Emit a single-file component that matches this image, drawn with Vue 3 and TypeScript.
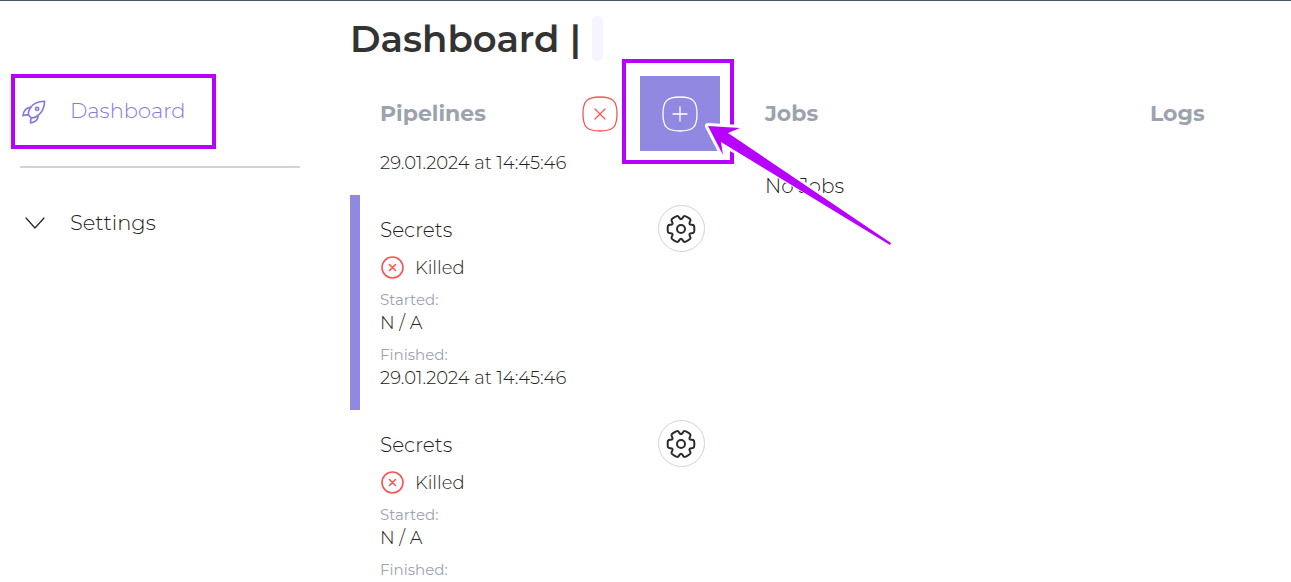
<script setup lang="ts">
import { onMounted, ref } from 'vue'

interface Pipeline {
  id: number
  name: string
  status: string
  started: string
  finished: string
  selected: boolean
}

const pipelines: Pipeline[] = [1, 2, 3].map((id) => ({
  id,
  name: 'Secrets',
  status: 'Killed',
  started: 'N / A',
  finished: '29.01.2024 at 14:45:46',
  selected: id === 2,
}))

const list = ref<HTMLElement | null>(null)

// The list opens scrolled to the end of the first pipeline.
onMounted(() => {
  if (list.value) list.value.scrollTop = 171
})

// Outline of a six-toothed cog with rounded corners.
function cogOutline(): string {
  const corners: [number, number][] = []
  for (let tooth = 0; tooth < 6; tooth++) {
    for (const [offset, radius] of [[-18, 13.2], [-11, 13.6], [11, 13.6], [18, 13.2], [25, 9.9], [35, 9.9]]) {
      const angle = ((tooth * 60 + offset) * Math.PI) / 180
      corners.push([radius * Math.cos(angle), radius * Math.sin(angle)])
    }
  }
  const mid = (a: [number, number], b: [number, number]) =>
    `${((a[0] + b[0]) / 2).toFixed(2)} ${((a[1] + b[1]) / 2).toFixed(2)}`
  const last = corners[corners.length - 1]
  let path = `M${mid(last, corners[0])}`
  corners.forEach((corner, i) => {
    const next = corners[(i + 1) % corners.length]
    path += `Q${corner[0].toFixed(2)} ${corner[1].toFixed(2)} ${mid(corner, next)}`
  })
  return path + 'Z'
}

const cog = cogOutline()
</script>

<template>
  <div class="page">
    <aside class="sidebar">
      <nav>
        <a href="#dashboard" class="link active">
          <svg class="rocket" viewBox="58 115 76 76" aria-hidden="true">
            <path d="M133 125C112 126 97 132 90 144C84 153 82 160 84 167L92 175C100 176 107 174 114 167C126 158 132 145 133 125Z" />
            <circle cx="110" cy="148" r="5" />
            <path d="M91 143C78 144 69 152 67 169C73 166 78 166 84 167M92 175C90 181 90 186 90 191C105 188 113 181 113 168" />
          </svg>
          <span>Dashboard</span>
          <span class="highlight nav-highlight"></span>
        </a>
        <hr />
        <a href="#settings" class="link">
          <svg class="chevron" viewBox="0 0 25 25" aria-hidden="true">
            <path d="M6 8L15 18L24 8" />
          </svg>
          <span>Settings</span>
        </a>
      </nav>
    </aside>

    <main class="main">
      <h1>Dashboard | <span class="placeholder"></span></h1>
      <div class="columns">
        <section class="column">
          <header class="head">
            <h2>Pipelines</h2>
            <button type="button" class="tool" aria-label="Close">
              <svg class="close" viewBox="0 0 36 36" aria-hidden="true">
                <path d="M18 1C31 1 35 5 35 18S31 35 18 35S1 31 1 18S5 1 18 1Z" />
                <path d="M13 13L23 23M23 13L13 23" />
              </svg>
            </button>
            <button type="button" class="tool add" aria-label="Add pipeline">
              <svg viewBox="0 0 36 36" aria-hidden="true">
                <path d="M18 1C31 1 35 5 35 18S31 35 18 35S1 31 1 18S5 1 18 1Z" />
                <path d="M18 11V25M11 18H25" />
              </svg>
              <span class="highlight add-highlight"></span>
            </button>
          </header>
          <div ref="list" class="list">
            <article v-for="p in pipelines" :key="p.id" class="item" :class="{ selected: p.selected }">
              <div class="info">
                <h3>{{ p.name }}</h3>
                <p class="status">
                  <svg viewBox="0 0 24 24" aria-hidden="true">
                    <circle cx="12.5" cy="11.5" r="10.5" />
                    <path d="M9.5 8.5L15.5 14.5M15.5 8.5L9.5 14.5" />
                  </svg>
                  {{ p.status }}
                </p>
                <dl>
                  <dt>Started:</dt>
                  <dd>{{ p.started }}</dd>
                  <dt>Finished:</dt>
                  <dd>{{ p.finished }}</dd>
                </dl>
              </div>
              <button type="button" class="gear" aria-label="Pipeline settings">
                <svg viewBox="-15 -15 30 30" aria-hidden="true">
                  <path :d="cog" />
                  <circle r="4" />
                </svg>
              </button>
            </article>
          </div>
        </section>

        <section class="column">
          <header class="head"><h2>Jobs</h2></header>
          <p class="empty">No Jobs</p>
          <svg class="arrow" viewBox="700 118 196 130" aria-hidden="true">
            <path class="halo" d="M708 126L740 128L728 133L850 216L720 142L723 155Z" />
            <path d="M708 126L740 128L728 133L891 243L890 245L721 142L723 155Z" />
          </svg>
        </section>

        <section class="column">
          <header class="head"><h2>Logs</h2></header>
        </section>
      </div>
    </main>
  </div>
</template>

<style>
body {
  margin: 0;
}
</style>

<style scoped>
.page {
  box-sizing: border-box;
  display: flex;
  height: 100vh;
  overflow: hidden;
  border-top: 1px solid #455a64;
  background: #fff;
  color: #222;
  font-family: Montserrat, Inter, "Open Sans", sans-serif;
  font-weight: 300;
}

svg {
  display: block;
  flex: none;
  overflow: visible;
  fill: none;
  stroke: currentColor;
  stroke-linecap: round;
  stroke-linejoin: round;
}

h1, h2, h3, p, dl, dd {
  margin: 0;
}

.sidebar {
  flex: none;
  width: 280px;
  padding: 84px 50px 0 20px;
}

.link {
  position: relative;
  display: flex;
  align-items: center;
  gap: 25px;
  height: 50px;
  color: #222;
  font-size: 21px;
  text-decoration: none;
}

.active {
  color: #8579e0;
}

hr {
  height: 2px;
  margin: 31px 0 29px;
  border: 0;
  background: #d1d3dc;
}

.rocket {
  width: 25px;
  height: 25px;
  stroke-width: 5;
}

.chevron {
  width: 25px;
  height: 25px;
  stroke-width: 1.2;
}

.highlight {
  position: absolute;
  border: 4px solid #b800ff;
  pointer-events: none;
}

.nav-highlight {
  inset: -11px 84px -14px -9px;
}

.add-highlight {
  inset: -17px -14px -13px -18px;
}

.main {
  display: flex;
  flex: 1;
  flex-direction: column;
  min-width: 0;
}

h1 {
  display: flex;
  align-items: center;
  gap: 1px;
  height: 75px;
  color: #333;
  font-size: 37px;
  font-weight: 600;
  white-space: pre;
}

.placeholder {
  width: 11px;
  height: 45px;
  border-radius: 5px;
  background: #f6f4fe;
}

.columns {
  display: grid;
  flex: 1;
  grid-template-columns: 9fr 9fr 4fr;
  min-height: 0;
}

.column {
  position: relative;
  display: flex;
  flex-direction: column;
  min-width: 0;
  min-height: 0;
}

.head {
  display: flex;
  flex: none;
  height: 75px;
  padding: 0 15px 0 30px;
  align-items: center;
}

h2 {
  flex: 1;
  color: #9ca3af;
  font-size: 22px;
  font-weight: 700;
}

.tool {
  position: relative;
  display: flex;
  align-items: center;
  justify-content: center;
  width: 80px;
  height: 75px;
  padding: 0;
  border: 0;
  background: none;
  color: #f85555;
}

.tool svg {
  width: 36px;
  height: 36px;
  stroke-width: 1.3;
}

.add {
  background: #9188e2;
  color: #fff;
}

.list {
  flex: 1;
  min-height: 0;
  overflow-y: auto;
  scrollbar-width: none;
}

.item {
  box-sizing: border-box;
  display: flex;
  align-items: flex-start;
  justify-content: space-between;
  height: 215px;
  padding: 10px 30px 10px 20px;
  border-left: 10px solid transparent;
}

.selected {
  border-color: #9188e2;
}

h3 {
  font-size: 20px;
  font-weight: 300;
  line-height: 50px;
}

.status {
  display: flex;
  align-items: center;
  gap: 11px;
  height: 26px;
  font-size: 18px;
}

.status svg {
  width: 24px;
  height: 24px;
  color: #f85555;
  stroke-width: 1.6;
}

dl {
  padding-top: 8px;
  font-size: 18px;
}

dt {
  color: #9ca3af;
  font-size: 15px;
  font-weight: 400;
  line-height: 22px;
}

dd {
  line-height: 24px;
  margin-bottom: 9px;
}

.gear {
  display: flex;
  align-items: center;
  justify-content: center;
  width: 47px;
  height: 47px;
  padding: 0;
  border: 1px solid #d1d3dc;
  border-radius: 50%;
  background: #fff;
  color: #2b2b2b;
}

.gear svg {
  width: 30px;
  height: 30px;
  stroke-width: 2;
}

.empty {
  padding: 20px 30px;
  font-size: 20px;
  line-height: 30px;
}

.arrow {
  position: absolute;
  top: 42px;
  left: -35px;
  width: 196px;
  height: 130px;
  fill: #b800ff;
  stroke: none;
  z-index: 1;
}

.halo {
  fill: #fff;
  stroke: #fff;
  stroke-width: 6;
}
</style>
